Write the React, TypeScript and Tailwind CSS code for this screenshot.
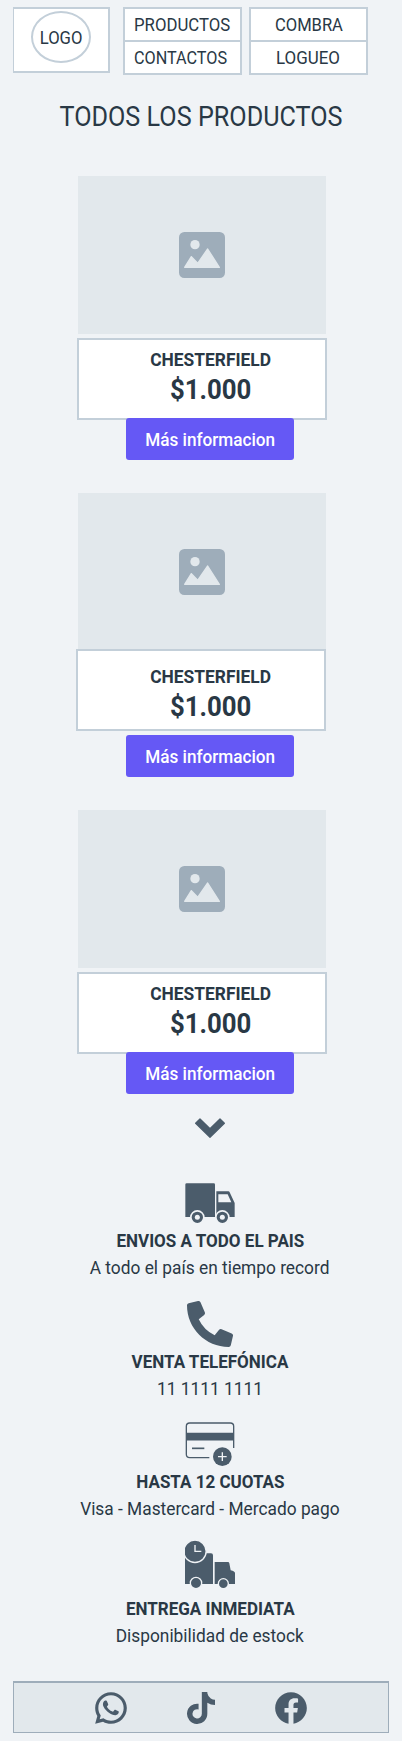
import React from "react";
import { FaPhoneAlt, FaTiktok } from "react-icons/fa";
import { RiWhatsappLine, RiFacebookCircleFill } from "react-icons/ri";

function ImageIcon() {
  return (
    <svg viewBox="0 0 138 138" className="h-[46px] w-[46px]" aria-hidden="true">
      <rect width="138" height="138" rx="16" fill="#9eadba" />
      <g fill="#e2e8ec" stroke="#e2e8ec" strokeLinejoin="round">
        <circle cx="48" cy="38" r="14" stroke="none" />
        <path d="M17 106 37 74 56 94 86 51 121 106z" strokeWidth="4" />
      </g>
    </svg>
  );
}

function TruckIcon() {
  return (
    <svg viewBox="0 0 150 120" className="h-10 w-[50px]" fill="#4b5c6b" aria-hidden="true">
      <path d="M5 1h81q4 0 4 4v97H1V5q0-4 4-4z" />
      <path fillRule="evenodd" d="M94 25h36q3 0 4 3l15 32v42H94zM100 34v24h39l-11-24z" />
      <g stroke="#f0f3f6" strokeWidth="5">
        <circle cx="37" cy="103" r="19.5" />
        <circle cx="112" cy="103" r="19.5" />
      </g>
      <g fill="#f0f3f6">
        <circle cx="37" cy="103" r="7.5" />
        <circle cx="112" cy="103" r="7.5" />
      </g>
    </svg>
  );
}

function CardIcon() {
  return (
    <svg viewBox="0 0 150 132" className="h-11 w-[50px]" fill="none" stroke="#4b5c6b" aria-hidden="true">
      <path d="M73 107H14Q4 107 4 97V13Q4 3 14 3h122q10 0 10 10v65" strokeWidth="4" />
      <path d="M4 44h142" strokeWidth="23" />
      <path d="M21 79h37" strokeWidth="5" />
      <circle cx="112" cy="104" r="28" fill="#4b5c6b" stroke="none" />
      <path d="M112 91v26M99 104h26" stroke="#f0f3f6" strokeWidth="4" />
    </svg>
  );
}

function ExpressIcon() {
  return (
    <svg viewBox="0 0 150 144" className="h-12 w-[50px]" fill="#4b5c6b" aria-hidden="true">
      <path d="M0 40h78q6 0 6 6v86H0z" />
      <path d="M89 66h40q3 0 4 4l4 21q13 3 13 8v33H89z" />
      <g stroke="#f0f3f6" strokeWidth="4">
        <circle cx="30" cy="34" r="33.5" />
        <circle cx="33" cy="129" r="17" />
        <circle cx="115" cy="131" r="15" />
      </g>
      <path d="M30 15v19h19" fill="none" stroke="#f0f3f6" strokeWidth="4" />
    </svg>
  );
}

function NavCell({ label, className }: { label: string; className: string }) {
  return (
    <a className="flex h-[35px] items-center border-2 border-[#c3cfd9] bg-white text-[18px] leading-[27px] [&+&]:-mt-0.5">
      <span className={className}>{label}</span>
    </a>
  );
}

function Product({ variant = "spaced" }: { variant?: "spaced" | "joined" }) {
  const joined = variant === "joined";
  return (
    <article className="flex h-[317px] flex-col">
      <div className="ml-[78px] flex h-[158px] w-[248px] shrink-0 items-center justify-center bg-[#e2e8ec]">
        <ImageIcon />
      </div>
      <div
        className={
          "flex h-[82px] w-[250px] shrink-0 flex-col items-center border-2 border-[#c3cfd9] bg-white font-bold " +
          (joined ? "-mt-0.5 ml-[76px] pl-[19px] pt-3" : "mt-1 ml-[77px] pl-[17px] pt-1.5")
        }
      >
        <h2 className="scale-x-[0.966] text-[18px] leading-[27px]">CHESTERFIELD</h2>
        <p className="scale-x-[0.955] text-[27px] leading-[34px]">$1.000</p>
      </div>
      <button
        className={
          "z-10 ml-[126px] flex h-[42px] w-[168px] shrink-0 items-center justify-center rounded-[3px] bg-[#6558f5] text-[18px] font-medium text-white " +
          (joined ? "mt-1" : "-mt-0.5")
        }
      >
        <span className="scale-x-[0.953] whitespace-nowrap">Más informacion</span>
      </button>
    </article>
  );
}

function Feature({
  icon,
  title,
  text,
  className,
  bodyClass,
}: {
  icon: React.ReactNode;
  title: string;
  text: string;
  className: string;
  bodyClass: string;
}) {
  return (
    <section className={"flex flex-col items-center pl-[18px] " + className}>
      {icon}
      <div className={"flex flex-col items-center whitespace-nowrap text-[18px] leading-[27px] " + bodyClass}>
        <h3 className="scale-x-[0.945] font-bold">{title}</h3>
        <p className="scale-x-[0.962]">{text}</p>
      </div>
    </section>
  );
}

export default function App() {
  return (
    <div className="flex h-[1741px] w-[402px] flex-col overflow-hidden bg-[#f0f3f6] font-['Roboto',sans-serif] text-[#293845]">
      <header className="flex h-[75px] shrink-0 items-start pl-[13px] pt-[7px]">
        <div className="flex h-[66px] w-[97px] justify-center border-2 border-l border-[#c3cfd9] bg-white pt-0.5">
          <div className="flex h-[52px] w-[60px] items-center justify-center rounded-[50%] border-2 border-[#c3cfd9] text-[18px]">
            <span className="scale-x-[0.927]">LOGO</span>
          </div>
        </div>
        <nav className="ml-[13px] flex gap-[7px]">
          <div className="flex w-[119px] flex-col">
            <NavCell label="PRODUCTOS" className="ml-[8.5px] origin-left scale-x-[0.93]" />
            <NavCell label="CONTACTOS" className="ml-[8.5px] origin-left scale-x-[0.9]" />
          </div>
          <div className="flex w-[119px] flex-col">
            <NavCell label="COMBRA" className="mx-auto scale-x-[0.92]" />
            <NavCell label="LOGUEO" className="mx-auto scale-x-[0.94]" />
          </div>
        </nav>
      </header>

      <h1 className="mt-6 h-[77px] shrink-0 scale-x-[0.933] whitespace-nowrap text-center text-[27px] leading-9">
        TODOS LOS PRODUCTOS
      </h1>

      <main className="flex shrink-0 flex-col">
        <Product />
        <Product variant="joined" />
        <Product />
      </main>

      <svg viewBox="0 0 90 60" className="-mt-[9px] ml-[195px] h-5 w-[30px] shrink-0" aria-hidden="true">
        <path d="M2 16 15 3 45 32 75 3 88 16 45 58z" fill="#4b5c6b" stroke="#4b5c6b" strokeWidth="4" strokeLinejoin="round" />
      </svg>

      <Feature className="mt-[45px]" bodyClass="mt-1" icon={<TruckIcon />} title="ENVIOS A TODO EL PAIS" text="A todo el país en tiempo record" />
      <Feature className="mt-5" bodyClass="mt-px" icon={<FaPhoneAlt className="h-[46px] w-[46px] text-[#4b5c6b]" />} title="VENTA TELEFÓNICA" text="11 1111 1111" />
      <Feature className="mt-5" bodyClass="mt-0.5" icon={<CardIcon />} title="HASTA 12 CUOTAS" text="Visa - Mastercard - Mercado pago" />
      <Feature className="mt-[18px]" bodyClass="mt-[7px]" icon={<ExpressIcon />} title="ENTREGA INMEDIATA" text="Disponibilidad de estock" />

      <footer className="ml-[13px] mt-8 flex h-[52px] w-[376px] shrink-0 items-center border border-t-2 border-[#9eadba] bg-[#e2e8ec] text-[#4b5c6b]">
        <RiWhatsappLine className="ml-[78px] h-[38px] w-[38px]" />
        <FaTiktok className="ml-[57px] h-8 w-7" />
        <RiFacebookCircleFill className="ml-[57px] h-[38px] w-[38px]" />
      </footer>
    </div>
  );
}
